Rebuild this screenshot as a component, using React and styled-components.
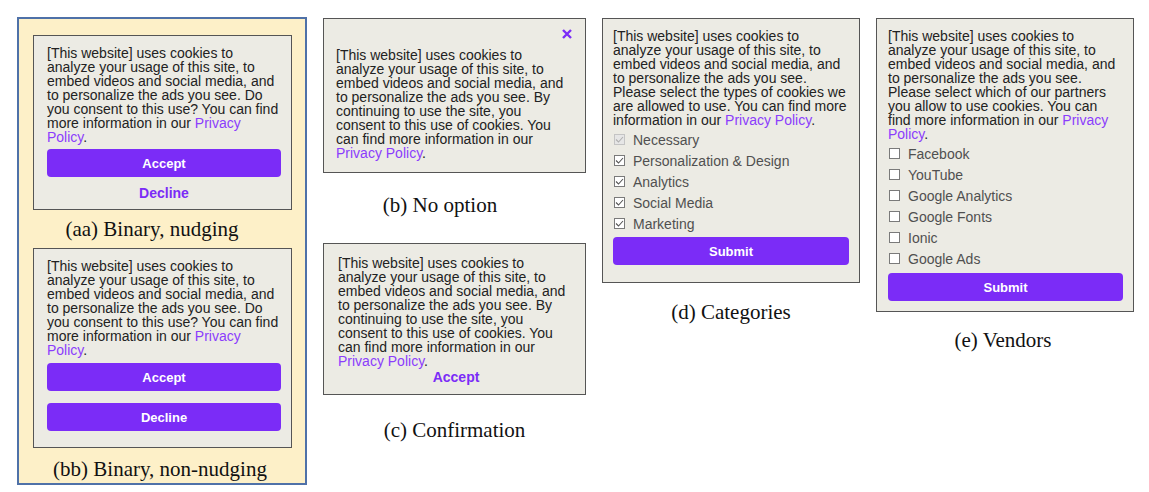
import React from 'react';
import styled, { createGlobalStyle } from 'styled-components';

const GlobalStyle = createGlobalStyle`
  body {
    margin: 0;
    background: #ffffff;
    font-family: "Liberation Sans", Arial, sans-serif;
  }
`;

const purple = '#7b2cf7';
const linkPurple = '#8b3dfc';

const Page = styled.div`
  display: flex;
  align-items: flex-start;
  gap: 16px;
  padding: 18px 0 0 17px;
`;

const Column = styled.div`
  display: flex;
  flex-direction: column;
  width: ${({ width }) => width}px;
  flex-shrink: 0;
`;

const Highlight = styled.div`
  display: flex;
  flex-direction: column;
  box-sizing: border-box;
  width: 290px;
  margin-top: -1px;
  padding: 16px 13px 2px 14px;
  border: 2px solid #4f71a8;
  background: #fdf0c8;
`;

const Banner = styled.div`
  display: flex;
  flex-direction: column;
  box-sizing: border-box;
  width: 100%;
  margin-top: ${({ top }) => top || 0}px;
  padding: ${({ pad }) => pad};
  border: 1px solid #555555;
  background: #ecebe4;
`;

const Message = styled.p`
  margin: 0;
  font-size: 14px;
  line-height: 14px;
  color: #222222;
`;

const Link = styled.a`
  color: ${linkPurple};
  text-decoration: none;
`;

const Button = styled.button`
  display: block;
  width: 100%;
  height: 28px;
  margin-top: ${({ gap }) => gap}px;
  padding: 0;
  border: none;
  border-radius: 4px;
  background: ${purple};
  color: #ffffff;
  font-family: "Liberation Sans", Arial, sans-serif;
  font-size: 13px;
  font-weight: bold;
`;

const TextButton = styled.button`
  display: block;
  width: 100%;
  height: ${({ h }) => h}px;
  margin-top: ${({ gap }) => gap}px;
  padding: 0;
  border: none;
  background: transparent;
  color: ${purple};
  font-family: "Liberation Sans", Arial, sans-serif;
  font-size: 14px;
  font-weight: bold;
`;

const CloseRow = styled.div`
  display: flex;
  justify-content: flex-end;
  align-items: center;
  height: 14px;
  margin-bottom: 7px;
`;

const CloseButton = styled.button`
  display: flex;
  padding: 0;
  border: none;
  background: transparent;
`;

const OptionList = styled.div`
  display: flex;
  flex-direction: column;
  margin-top: 2px;
`;

const Option = styled.label`
  display: flex;
  align-items: center;
  gap: 8px;
  height: 21px;
  padding-left: 1px;
  font-size: 14px;
  color: #505050;
`;

const Box = styled.span`
  display: flex;
  align-items: center;
  justify-content: center;
  box-sizing: border-box;
  width: 11px;
  height: 11px;
  border: 1px solid ${({ disabled }) => (disabled ? '#c4c4c4' : '#7a7a7a')};
  background: ${({ disabled }) => (disabled ? '#e6e6e6' : '#ffffff')};
`;

const Caption = styled.div`
  margin-top: ${({ gap }) => gap}px;
  padding-right: ${({ shift }) => shift || 0}px;
  font-family: "Liberation Serif", "Times New Roman", serif;
  font-size: 21px;
  line-height: 24px;
  text-align: center;
  color: #111111;
`;

const Checkbox = ({ checked, disabled }) => (
  <Box disabled={disabled}>
    {checked && (
      <svg width="9" height="9" viewBox="0 0 9 9">
        <polyline
          points="1,4.5 3.5,7 8,2"
          fill="none"
          stroke={disabled ? '#b0b0b0' : '#555555'}
          strokeWidth="1.1"
        />
      </svg>
    )}
  </Box>
);

const intro =
  '[This website] uses cookies to analyze your usage of this site, to embed videos and social media, and to personalize the ads you see.';

const Policy = () => <Link href="#">Privacy Policy</Link>;

const categories = [
  { name: 'Necessary', disabled: true },
  { name: 'Personalization & Design' },
  { name: 'Analytics' },
  { name: 'Social Media' },
  { name: 'Marketing' },
];

const vendors = ['Facebook', 'YouTube', 'Google Analytics', 'Google Fonts', 'Ionic', 'Google Ads'];

export default function App() {
  return (
    <>
      <GlobalStyle />
      <Page>
        <Highlight>
          <Banner pad="10px 10px 2px 13px">
            <Message>
              {intro} Do you consent to this use? You can find more information in our <Policy />.
            </Message>
            <Button gap={5}>Accept</Button>
            <TextButton h={28} gap={2}>Decline</TextButton>
          </Banner>
          <Caption gap={7} shift={21}>(aa) Binary, nudging</Caption>

          <Banner pad="10px 10px 16px 13px" top={7}>
            <Message>
              {intro} Do you consent to this use? You can find more information in our <Policy />.
            </Message>
            <Button gap={6}>Accept</Button>
            <Button gap={12}>Decline</Button>
          </Banner>
          <Caption gap={9} shift={5}>(bb) Binary, non-nudging</Caption>
        </Highlight>

        <Column width={263}>
          <Banner pad="8px 13px 12px 12px">
            <CloseRow>
              <CloseButton aria-label="Close">
                <svg width="10" height="10" viewBox="0 0 10 10">
                  <path d="M1 1 L9 9 M9 1 L1 9" stroke={purple} strokeWidth="2.4" />
                </svg>
              </CloseButton>
            </CloseRow>
            <Message>
              {intro} By continuing to use the site, you consent to this use of cookies. You can find
              more information in our <Policy />.
            </Message>
          </Banner>
          <Caption gap={20} shift={29}>(b) No option</Caption>

          <Banner pad="12px 11px 8px 14px" top={26}>
            <Message>
              {intro} By continuing to use the site, you consent to this use of cookies. You can find
              more information in our <Policy />.
            </Message>
            <TextButton h={18} gap={0}>Accept</TextButton>
          </Banner>
          <Caption gap={23}>(c) Confirmation</Caption>
        </Column>

        <Column width={258}>
          <Banner pad="10px 10px 17px 10px">
            <Message>
              {intro} Please select the types of cookies we are allowed to use. You can find more
              information in our <Policy />.
            </Message>
            <OptionList>
              {categories.map((c) => (
                <Option key={c.name}>
                  <Checkbox checked disabled={c.disabled} />
                  {c.name}
                </Option>
              ))}
            </OptionList>
            <Button gap={3}>Submit</Button>
          </Banner>
          <Caption gap={17}>(d) Categories</Caption>
        </Column>

        <Column width={258}>
          <Banner pad="10px 10px 10px 11px">
            <Message>
              {intro} Please select which of our partners you allow to use cookies. You can find more
              information in our <Policy />.
            </Message>
            <OptionList>
              {vendors.map((v) => (
                <Option key={v}>
                  <Checkbox />
                  {v}
                </Option>
              ))}
            </OptionList>
            <Button gap={4}>Submit</Button>
          </Banner>
          <Caption gap={16} shift={4}>(e) Vendors</Caption>
        </Column>
      </Page>
    </>
  );
}
